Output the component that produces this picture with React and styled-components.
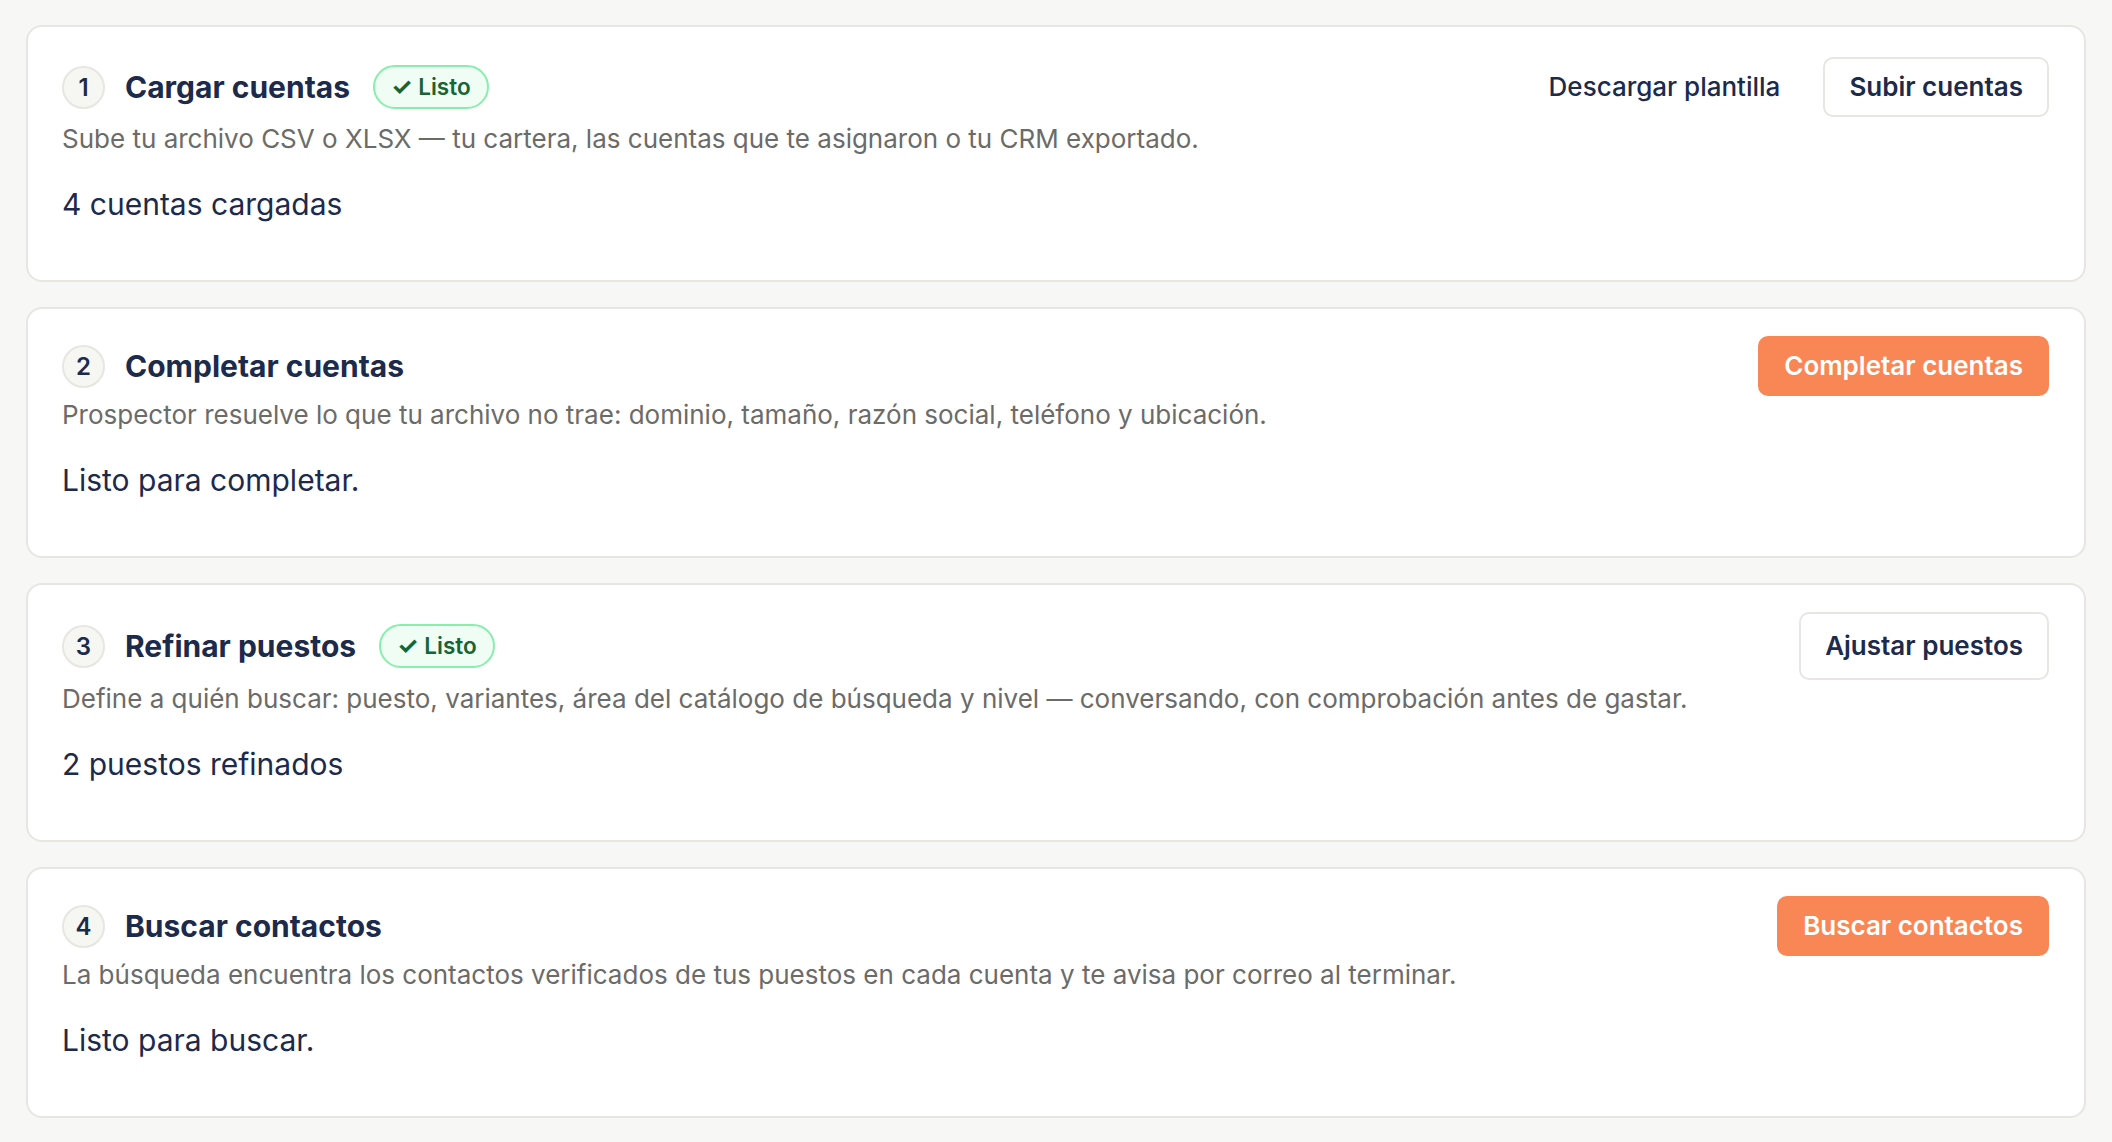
import styled, { createGlobalStyle } from 'styled-components'

const GlobalStyle = createGlobalStyle`
  * {
    box-sizing: border-box;
  }

  body {
    margin: 0;
    background: #f7f7f5;
    font-family: Inter, "Noto Sans", "Liberation Sans", sans-serif;
    color: #1c2a4b;
  }
`

const Page = styled.main`
  display: flex;
  flex-direction: column;
  gap: 25px;
  padding: 25px 26px;
`

const Card = styled.section`
  background: #ffffff;
  border: 2px solid #e7e6e1;
  border-radius: 16px;
  padding: 27px 35px 56px 34px;
`

const Header = styled.div`
  display: flex;
  align-items: center;
  justify-content: space-between;
`

const TitleGroup = styled.div`
  display: flex;
  align-items: center;
  gap: 20px;
`

const StepNumber = styled.span`
  display: flex;
  align-items: center;
  justify-content: center;
  width: 43px;
  height: 43px;
  border-radius: 50%;
  border: 2px solid #e7e6e1;
  background: #f6f6f3;
  font-size: 24px;
  font-weight: 600;
  color: #1c2a4b;
`

const Title = styled.h2`
  margin: 0;
  font-size: 30px;
  line-height: 40px;
  font-weight: 700;
  color: #1c2a4b;
`

const Badge = styled.span`
  display: inline-flex;
  align-items: center;
  gap: 6px;
  margin-left: 3px;
  padding: 6px 16px;
  border: 2px solid #86efac;
  border-radius: 999px;
  background: #f0fdf4;
  color: #166534;
  font-size: 22.5px;
  line-height: 28px;
  font-weight: 600;
`

const Check = styled.span`
  font-size: 24px;
  font-weight: 700;
`

const Actions = styled.div`
  display: flex;
  align-items: center;
  gap: 43px;
`

const TextLink = styled.a`
  padding: 17px 0;
  font-size: 26px;
  line-height: 32px;
  font-weight: 500;
  color: #1c2a4b;
  text-decoration: none;
  cursor: pointer;
`

const Button = styled.button`
  padding: ${(p) => (p.$tall ? '16px' : '12px')} 24px;
  border: 2px solid ${(p) => (p.$primary ? '#f98755' : '#e7e6e1')};
  border-radius: 10px;
  background: ${(p) => (p.$primary ? '#f98755' : '#ffffff')};
  color: ${(p) => (p.$primary ? '#ffffff' : '#1c2a4b')};
  font-family: inherit;
  font-size: 26px;
  line-height: 32px;
  font-weight: 600;
  cursor: pointer;
`

const Description = styled.p`
  margin: 0;
  font-size: 26px;
  line-height: 38px;
  color: #6b6b69;
`

const Status = styled.p`
  margin: 26px 0 0;
  font-size: 30px;
  line-height: 40px;
  color: #1c2a4b;
`

const steps = [
  {
    n: 1,
    title: 'Cargar cuentas',
    done: true,
    text: 'Sube tu archivo CSV o XLSX — tu cartera, las cuentas que te asignaron o tu CRM exportado.',
    status: '4 cuentas cargadas',
    link: 'Descargar plantilla',
    action: 'Subir cuentas',
  },
  {
    n: 2,
    title: 'Completar cuentas',
    text: 'Prospector resuelve lo que tu archivo no trae: dominio, tamaño, razón social, teléfono y ubicación.',
    status: 'Listo para completar.',
    action: 'Completar cuentas',
    primary: true,
  },
  {
    n: 3,
    title: 'Refinar puestos',
    done: true,
    text: 'Define a quién buscar: puesto, variantes, área del catálogo de búsqueda y nivel — conversando, con comprobación antes de gastar.',
    status: '2 puestos refinados',
    action: 'Ajustar puestos',
    tall: true,
  },
  {
    n: 4,
    title: 'Buscar contactos',
    text: 'La búsqueda encuentra los contactos verificados de tus puestos en cada cuenta y te avisa por correo al terminar.',
    status: 'Listo para buscar.',
    action: 'Buscar contactos',
    primary: true,
  },
]

const App = () => {
  return (
    <>
      <GlobalStyle />
      <Page>
        {steps.map((step) => (
          <Card key={step.n}>
            <Header>
              <TitleGroup>
                <StepNumber>{step.n}</StepNumber>
                <Title>{step.title}</Title>
                {step.done && (
                  <Badge>
                    <Check>✓</Check>
                    Listo
                  </Badge>
                )}
              </TitleGroup>
              <Actions>
                {step.link && <TextLink>{step.link}</TextLink>}
                <Button $primary={step.primary} $tall={step.tall}>
                  {step.action}
                </Button>
              </Actions>
            </Header>
            <Description>{step.text}</Description>
            <Status>{step.status}</Status>
          </Card>
        ))}
      </Page>
    </>
  )
}

export default App
